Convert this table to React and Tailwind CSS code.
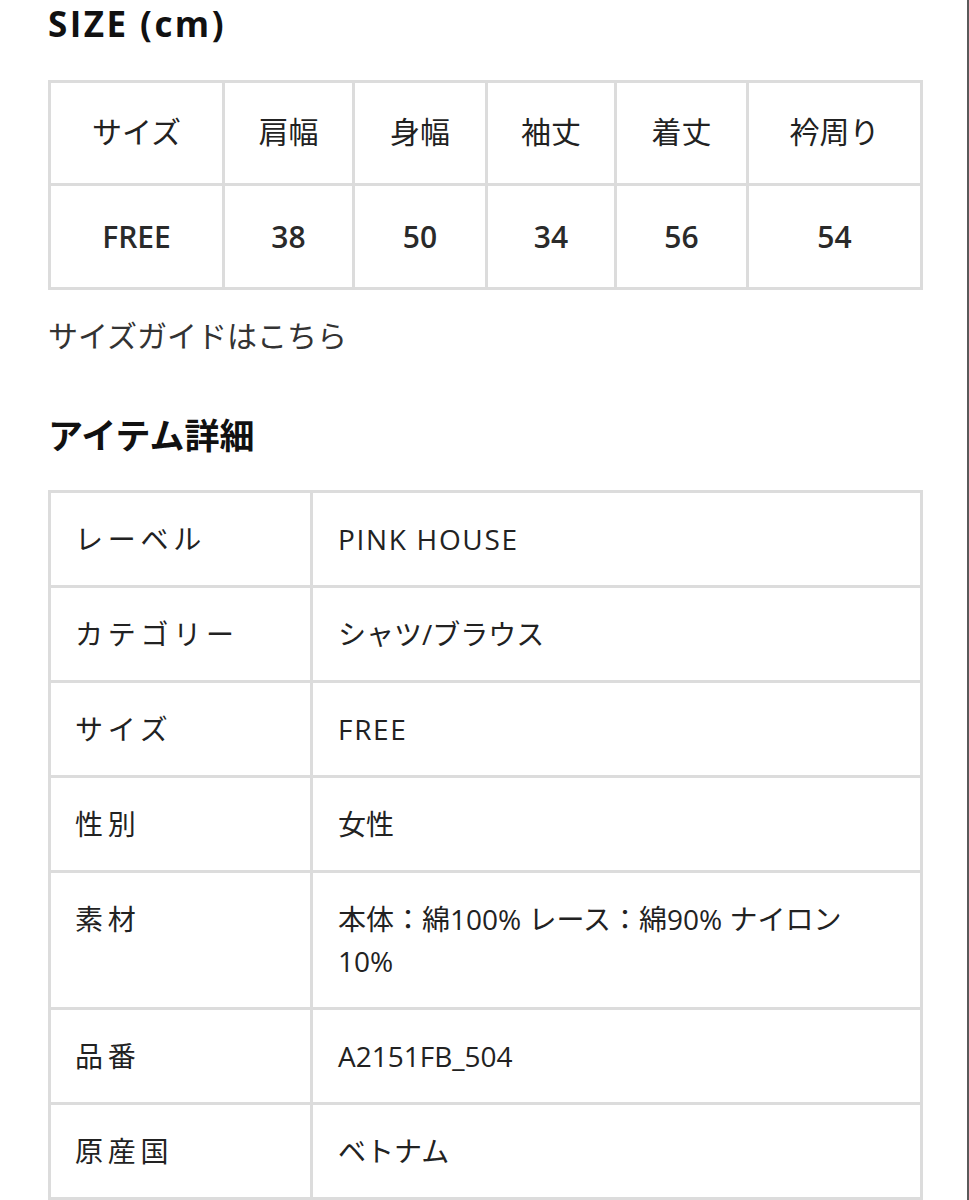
const sizeHead = ['サイズ', '肩幅', '身幅', '袖丈', '着丈', '衿周り'];
const sizeRow = ['FREE', '38', '50', '34', '56', '54'];
const colW = ['w-[174px]', 'w-[130px]', 'w-[133px]', 'w-[129px]', 'w-[132px]', 'w-[174px]'];

// wide: latin-only values, the original font runs wider than Open Sans
const details = [
  { k: 'レーベル', v: 'PINK HOUSE', wide: true },
  { k: 'カテゴリー', v: 'シャツ/ブラウス' },
  { k: 'サイズ', v: 'FREE', wide: true },
  { k: '性別', v: '女性' },
  { k: '素材', v: '本体：綿100% レース：綿90% ナイロン 10%' },
  { k: '品番', v: 'A2151FB_504' },
  { k: '原産国', v: 'ベトナム' },
];

export default function App() {
  return (
    <div
      className="w-[969px] min-h-[1200px] bg-white border-r-[2px] border-[#5a5a5a] text-[#222]"
      style={{ fontFamily: '"Open Sans", "Noto Sans CJK JP", sans-serif' }}
    >
      <div className="pl-[48px] pr-[47px]">
        <h2 className="text-[35px] leading-[48px] font-bold tracking-[0.07em] text-[#111]">SIZE (cm)</h2>

        <table className="mt-[32px] w-[872px] table-fixed border-collapse">
          <colgroup>
            {colW.map((w, i) => (
              <col key={i} className={w} />
            ))}
          </colgroup>
          <tbody>
            <tr className="h-[103px]">
              {sizeHead.map((t) => (
                <td key={t} className="border-[3px] border-[#dcdcdc] text-center align-middle text-[30px] pb-[4px]">
                  {t}
                </td>
              ))}
            </tr>
            <tr className="h-[104px]">
              {sizeRow.map((t, i) => (
                <td key={i} className="border-[3px] border-[#dcdcdc] text-center align-middle text-[30px] font-semibold text-[#2a2a2a]">
                  {t}
                </td>
              ))}
            </tr>
          </tbody>
        </table>

        <p className="mt-[26px] text-[30px] leading-[40px] text-[#333]">サイズガイドはこちら</p>

        <h2 className="mt-[56px] text-[35px] leading-[48px] font-bold text-[#111]">アイテム詳細</h2>

        <table className="mt-[30px] w-[872px] table-fixed border-collapse">
          <colgroup>
            <col className="w-[262px]" />
            <col className="w-[610px]" />
          </colgroup>
          <tbody>
            {details.map((d) => (
              <tr key={d.k}>
                <td className="border-[3px] border-[#dcdcdc] align-top pl-[24px] pr-[10px] py-[25px] text-[28px] leading-[42px] tracking-[0.17em]">
                  {d.k}
                </td>
                <td
                  className={
                    d.wide
                      ? 'border-[3px] border-[#dcdcdc] align-top pl-[25px] pr-[60px] py-[25px] text-[28px] leading-[42px] tracking-[0.06em]'
                      : 'border-[3px] border-[#dcdcdc] align-top pl-[25px] pr-[60px] py-[25px] text-[28px] leading-[42px]'
                  }
                >
                  {d.v}
                </td>
              </tr>
            ))}
          </tbody>
        </table>
      </div>
    </div>
  );
}
